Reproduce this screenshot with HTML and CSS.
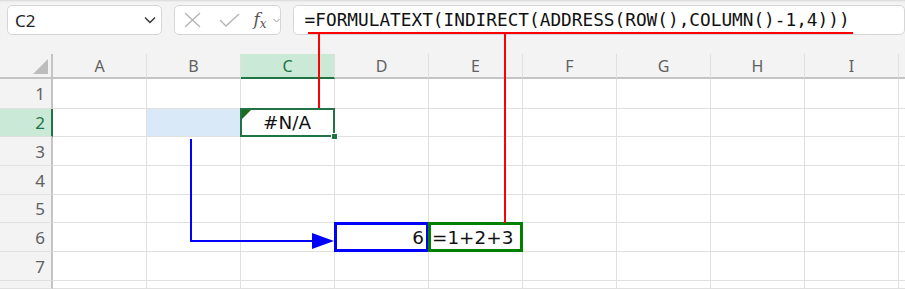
FILE: index.html
```html
<!DOCTYPE html>
<html lang="en">
<head>
  <meta charset="UTF-8" />
  <title>FORMULATEXT INDIRECT</title>
  <link rel="stylesheet" href="styles.css">
</head>
<body>
  <div class="toolbar">
    <div class="name-box">
      <span>C2</span>
      <svg class="chevron" width="12" height="8" viewBox="0 0 12 8"><path d="M1 1.5 L6 6.5 L11 1.5" fill="none" stroke="#333" stroke-width="1.4"/></svg>
    </div>
    <div class="fx-box">
      <svg class="icon-x" width="17" height="16" viewBox="0 0 17 16"><path d="M1 1 L16 15 M16 1 L1 15" stroke="#b3b3b3" stroke-width="1.3" fill="none"/></svg>
      <svg class="icon-ok" width="21" height="14" viewBox="0 0 21 14"><path d="M1 7 L7 13 L20 1" stroke="#b3b3b3" stroke-width="1.3" fill="none"/></svg>
      <span class="fx">f<sub>x</sub></span>
      <svg class="icon-more" width="7" height="5" viewBox="0 0 7 5"><path d="M0.5 1 L3.5 4 L6.5 1" stroke="#9a9a9a" stroke-width="1" fill="none"/></svg>
    </div>
    <div class="formula-box">=FORMULATEXT(INDIRECT(ADDRESS(ROW(),COLUMN()-1,4)))</div>
  </div>

  <div class="sheet">
    <div class="corner">
      <svg width="15" height="15" viewBox="0 0 15 15"><path d="M15 0 V15 H0 Z" fill="#bdbdbd"/></svg>
    </div>
    <div class="col-head">A</div>
    <div class="col-head">B</div>
    <div class="col-head active">C</div>
    <div class="col-head">D</div>
    <div class="col-head">E</div>
    <div class="col-head">F</div>
    <div class="col-head">G</div>
    <div class="col-head">H</div>
    <div class="col-head">I</div>
    <div class="col-head"></div>

    <div class="row-head">1</div>
    <div class="cell"></div><div class="cell"></div><div class="cell"></div><div class="cell"></div><div class="cell"></div><div class="cell"></div><div class="cell"></div><div class="cell"></div><div class="cell"></div><div class="cell"></div>

    <div class="row-head active">2</div>
    <div class="cell"></div><div class="cell fill"></div><div class="cell selected error">#N/A</div><div class="cell"></div><div class="cell"></div><div class="cell"></div><div class="cell"></div><div class="cell"></div><div class="cell"></div><div class="cell"></div>

    <div class="row-head">3</div>
    <div class="cell"></div><div class="cell"></div><div class="cell"></div><div class="cell"></div><div class="cell"></div><div class="cell"></div><div class="cell"></div><div class="cell"></div><div class="cell"></div><div class="cell"></div>

    <div class="row-head">4</div>
    <div class="cell"></div><div class="cell"></div><div class="cell"></div><div class="cell"></div><div class="cell"></div><div class="cell"></div><div class="cell"></div><div class="cell"></div><div class="cell"></div><div class="cell"></div>

    <div class="row-head">5</div>
    <div class="cell"></div><div class="cell"></div><div class="cell"></div><div class="cell"></div><div class="cell"></div><div class="cell"></div><div class="cell"></div><div class="cell"></div><div class="cell"></div><div class="cell"></div>

    <div class="row-head">6</div>
    <div class="cell"></div><div class="cell"></div><div class="cell"></div><div class="cell num boxed blue">6</div><div class="cell boxed green">=1+2+3</div><div class="cell"></div><div class="cell"></div><div class="cell"></div><div class="cell"></div><div class="cell"></div>

    <div class="row-head">7</div>
    <div class="cell"></div><div class="cell"></div><div class="cell"></div><div class="cell"></div><div class="cell"></div><div class="cell"></div><div class="cell"></div><div class="cell"></div><div class="cell"></div><div class="cell"></div>

    <div class="row-head"></div>
    <div class="cell"></div><div class="cell"></div><div class="cell"></div><div class="cell"></div><div class="cell"></div><div class="cell"></div><div class="cell"></div><div class="cell"></div><div class="cell"></div><div class="cell"></div>
  </div>

  <!-- annotation arrows drawn over the sheet -->
  <svg class="overlay" width="905" height="289" viewBox="0 0 905 289">
    <path d="M308 33 H853 M319 33 V108 M505 33 V223" stroke="#ff0000" stroke-width="2" fill="none"/>
    <path d="M191 139 V241 H314" stroke="#0000ff" stroke-width="2" fill="none"/>
    <path d="M312 233 L334 241 L312 249 Z" fill="#0000ff"/>
  </svg>
</body>
</html>
```

FILE: styles.css
```css
body {
  margin: 0;
  width: 905px;
  height: 289px;
  overflow: hidden;
  position: relative;
  background: #fff;
  font-family: "Noto Sans", "Open Sans", sans-serif;
}
.toolbar {
  height: 54px;
  box-sizing: border-box;
  background: #f3f3f3;
  box-shadow: inset 0 2px 2px -1px rgba(0, 0, 0, 0.12);
  display: flex;
  align-items: flex-start;
  gap: 12px;
  padding: 5px 0 0 7px;
}
.name-box,
.fx-box,
.formula-box {
  height: 30px;
  box-sizing: border-box;
  background: #fff;
  border: 1px solid #d6d6d6;
  border-radius: 5px;
  display: flex;
  align-items: center;
}
.name-box {
  width: 161px;
  padding: 0 5px 0 7px;
  justify-content: space-between;
  font-size: 17px;
  color: #242424;
}
.fx-box {
  width: 111px;
  padding: 0 0 0 9px;
}
.icon-x {
  margin-right: 18px;
}
.icon-ok {
  margin-right: 14px;
}
.fx {
  font-family: "DejaVu Serif", serif;
  font-style: italic;
  font-size: 17px;
  color: #555;
  line-height: 1;
  margin-right: 6px;
}
.fx sub {
  font-size: 12px;
  vertical-align: -3px;
}
.formula-box {
  width: 640px;
  padding-left: 11px;
  font-family: "DejaVu Sans Mono", monospace;
  font-size: 17.75px;
  color: #111;
}
.sheet {
  display: grid;
  grid-template-columns: 53px repeat(9, 94px) 1fr;
  grid-template-rows: 25px 30px 28px 29px 29px 28px 29px 29px 8px;
}
.corner,
.col-head,
.row-head {
  background: #f3f3f3;
  color: #616161;
  box-sizing: border-box;
}
.corner {
  border-right: 2px solid #c4c4c4;
  border-bottom: 2px solid #c4c4c4;
  display: flex;
  justify-content: flex-end;
  align-items: flex-end;
  padding: 0 3px 3px 0;
}
.corner svg {
  display: block;
}
.col-head {
  border-right: 1px solid #e0e0e0;
  border-bottom: 2px solid #c4c4c4;
  display: flex;
  align-items: center;
  justify-content: center;
  font-size: 16px;
}
.col-head.active {
  background: #caead7;
  color: #1e7145;
  border-bottom-color: #217346;
}
.row-head {
  border-right: 2px solid #c4c4c4;
  border-bottom: 1px solid #e0e0e0;
  display: flex;
  align-items: center;
  justify-content: flex-end;
  padding-right: 6px;
  font-size: 17px;
}
.row-head.active {
  background: #caead7;
  color: #1e7145;
  border-right-color: #217346;
}
.cell {
  box-sizing: border-box;
  border-right: 1px solid #e0e0e0;
  border-bottom: 1px solid #e0e0e0;
  position: relative;
  display: flex;
  align-items: center;
  font-family: "DejaVu Sans", sans-serif;
  font-size: 18.4px;
  color: #111;
  padding: 0 4px 0 3px;
}
.cell.fill {
  background: #dae9f8;
}
.cell.selected {
  justify-content: center;
}
.cell.selected::after {
  content: "";
  position: absolute;
  inset: -1px -1px -1px -1px;
  border: 2px solid #217346;
}
.cell.selected::before {
  content: "";
  position: absolute;
  left: 1px;
  top: 1px;
  width: 0;
  height: 0;
  border-top: 9px solid #1e6b1e;
  border-right: 9px solid transparent;
}
.cell.num {
  justify-content: flex-end;
}
.cell.boxed::after {
  content: "";
  position: absolute;
  inset: -1px -1px -1px -1px;
  border: 3px solid;
}
.cell.blue::after {
  border-color: #0000ff;
}
.cell.green::after {
  border-color: #008000;
}
.sheet .selected + .cell::before {
  content: "";
  position: absolute;
  left: -4px;
  bottom: -4px;
  width: 5px;
  height: 5px;
  background: #217346;
  border: 1px solid #fff;
  z-index: 2;
}
.overlay {
  position: absolute;
  left: 0;
  top: 0;
  pointer-events: none;
}
```
